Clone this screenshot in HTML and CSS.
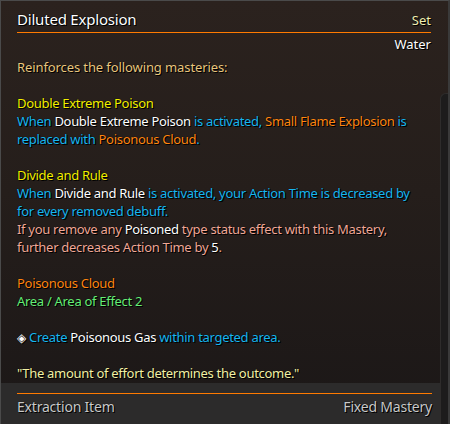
FILE: index.html
```html
<!DOCTYPE html>
<html>
<head>
<meta charset="utf-8">
<link rel="stylesheet" href="styles.css">
</head>
<body>
<div class="tip">
  <div class="main">
    <div class="head">
      <div class="row">
        <span class="title">Diluted Explosion</span>
        <span class="set">Set</span>
      </div>
      <div class="rule"></div>
      <div class="sub">Water</div>
    </div>
    <div class="content">
      <p class="line tan intro">Reinforces the following masteries:</p>
      <p class="line blank"></p>
      <p class="line yel">Double Extreme Poison</p>
      <p class="line cy">When <span class="wh">Double Extreme Poison</span> is activated, <span class="or">Small Flame Explosion</span> is</p>
      <p class="line cy">replaced with <span class="or">Poisonous Cloud</span>.</p>
      <p class="line blank"></p>
      <p class="line yel">Divide and Rule</p>
      <p class="line cy">When <span class="wh">Divide and Rule</span> is activated, your Action Time is decreased by</p>
      <p class="line cy">for every removed debuff.</p>
      <p class="line sal">If you remove any <span class="wh">Poisoned</span> type status effect with this Mastery,</p>
      <p class="line sal">further decreases Action Time by <span class="wh">5</span>.</p>
      <p class="line blank"></p>
      <p class="line or">Poisonous Cloud</p>
      <p class="line grn">Area / Area of Effect 2</p>
      <p class="line blank"></p>
      <p class="line cy"><span class="wh dia">◈</span> Create <span class="wh">Poisonous Gas</span> within targeted area.</p>
      <p class="line blank"></p>
      <p class="line quote">"The amount of effort determines the outcome."</p>
    </div>
    <div class="foot">
      <div class="rule"></div>
      <div class="row">
        <span class="ft">Extraction Item</span>
        <span class="ft">Fixed Mastery</span>
      </div>
    </div>
  </div>
  <div class="side">
    <div class="track"></div>
  </div>
</div>
</body>
</html>
```
FILE: styles.css
```css
* { box-sizing: border-box; }
html, body { margin: 0; padding: 0; background: #1a1717; }
body { width: 450px; height: 424px; overflow: hidden; }

.tip {
  width: 450px;
  height: 424px;
  display: flex;
  border-top: 1px solid #4a4a4a;
  border-left: 1px solid #4a4a4a;
  border-right: 2px solid #3a3a3a;
  background: linear-gradient(to bottom, #2b221e 0%, #251e1b 45%, #1b1717 100%);
  font-family: "Noto Sans", "DejaVu Sans", sans-serif;
  font-size: 13px;
  color: #fff;
}

.main {
  flex: 1;
  display: flex;
  flex-direction: column;
  min-width: 0;
}

.head { padding: 8px 9px 0 16px; }
.row { display: flex; justify-content: space-between; align-items: baseline; }

.title {
  font-size: 15px;
  line-height: 20px;
  color: #fff;
  letter-spacing: -0.2px;
  text-shadow: 1px 1px 0 #000, 0 0 1px #000, 0 0 1px #000;
}
.set {
  font-size: 13px;
  color: #f1efb2;
  text-shadow: 1px 1px 0 #000, 0 0 1px #000;
}
.rule { height: 1px; background: #ff7a00; margin-top: 3px; }
.sub {
  text-align: right;
  line-height: 18px;
  margin-top: 2px;
  text-shadow: 1px 1px 0 #000, 0 0 1px #000;
}

.content { flex: 1; padding: 5px 0 0 16px; }
.line {
  margin: 0;
  height: 18px;
  line-height: 18px;
  white-space: nowrap;
  letter-spacing: -0.3px;
  text-shadow: 1px 1px 0 #000, 0 0 1px #000;
}
.intro { letter-spacing: -0.1px; }

.tan { color: #e9c67e; }
.yel { color: #f3ef00; }
.cy { color: #18b6f0; }
.wh { color: #ffffff; }
.or { color: #ff8612; }
.sal { color: #f1a897; }
.grn { color: #66ee76; }
.quote { color: #f2f0a4; }
.dia { font-family: "DejaVu Sans", sans-serif; font-size: 12px; }

.foot {
  height: 41px;
  background: #2c2b2b;
  padding: 9px 9px 0 16px;
  margin-right: -1px;
}
.foot .rule { margin-top: 1px; }
.ft {
  font-size: 14px;
  line-height: 20px;
  margin-top: 3px;
  color: #c9c9c9;
  letter-spacing: -0.2px;
  text-shadow: 1px 1px 0 #000, 0 0 1px #000;
}

.side {
  width: 8px;
  display: flex;
  flex-direction: column;
  padding-top: 92px;
}
.track {
  flex: 1;
  background: #1d1c1c;
  border-left: 1px solid #2e2c2b;
  border-top: 1px solid #2e2c2b;
  border-top-left-radius: 6px;
}
```
